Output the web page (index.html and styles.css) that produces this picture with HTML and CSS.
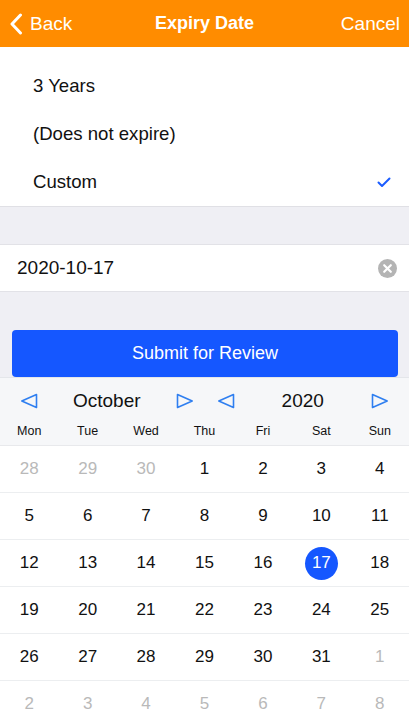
FILE: index.html
```html
<!DOCTYPE html>
<html>
<head>
    <title>Expiry Date</title>
    <link rel="stylesheet" href="styles.css">
</head>
<body>
    <div class="topbar">
        <div class="back">
            <svg width="14" height="22" viewBox="0 0 14 22"><path d="M11.5 2 L3 11 L11.5 20" fill="none" stroke="#fff" stroke-width="3" stroke-linecap="round" stroke-linejoin="round"/></svg>
            <span>Back</span>
        </div>
        <div class="title">Expiry Date</div>
        <div class="cancel">Cancel</div>
    </div>

    <div class="options">
        <div class="option">3 Years</div>
        <div class="option">(Does not expire)</div>
        <div class="option">Custom
            <svg class="check" width="14" height="11" viewBox="0 0 14 11"><path d="M1.5 5.5 L5 9 L12.5 1.5" fill="none" stroke="#1a5cff" stroke-width="2" stroke-linecap="round" stroke-linejoin="round"/></svg>
        </div>
    </div>

    <div class="gap"></div>

    <div class="field">
        <span>2020-10-17</span>
        <svg width="19" height="19" viewBox="0 0 19 19"><circle cx="9.5" cy="9.5" r="9.5" fill="#b4b4b4"/><path d="M6.2 6.2 L12.8 12.8 M12.8 6.2 L6.2 12.8" stroke="#fff" stroke-width="2.2" stroke-linecap="round"/></svg>
    </div>

    <div class="actions">
        <button class="submit">Submit for Review</button>
    </div>

    <div class="calendar">
        <div class="cal-head">
            <div class="nav month">
                <svg class="arrow" width="18" height="16" viewBox="0 0 18 16"><path d="M16.5 1.5 L1.8 8 L16.5 14.5 Z" fill="none" stroke="#2f7ff0" stroke-width="1.6" stroke-linejoin="round"/></svg>
                <span class="label">October</span>
                <svg class="arrow" width="18" height="16" viewBox="0 0 18 16"><path d="M1.5 1.5 L16.2 8 L1.5 14.5 Z" fill="none" stroke="#2f7ff0" stroke-width="1.6" stroke-linejoin="round"/></svg>
            </div>
            <div class="nav year">
                <svg class="arrow" width="18" height="16" viewBox="0 0 18 16"><path d="M16.5 1.5 L1.8 8 L16.5 14.5 Z" fill="none" stroke="#2f7ff0" stroke-width="1.6" stroke-linejoin="round"/></svg>
                <span class="label">2020</span>
                <svg class="arrow" width="18" height="16" viewBox="0 0 18 16"><path d="M1.5 1.5 L16.2 8 L1.5 14.5 Z" fill="none" stroke="#2f7ff0" stroke-width="1.6" stroke-linejoin="round"/></svg>
            </div>
        </div>
        <div class="weekdays">
            <span>Mon</span><span>Tue</span><span>Wed</span><span>Thu</span><span>Fri</span><span>Sat</span><span>Sun</span>
        </div>
        <div class="week">
            <span class="muted">28</span><span class="muted">29</span><span class="muted">30</span><span>1</span><span>2</span><span>3</span><span>4</span>
        </div>
        <div class="week">
            <span>5</span><span>6</span><span>7</span><span>8</span><span>9</span><span>10</span><span>11</span>
        </div>
        <div class="week">
            <span>12</span><span>13</span><span>14</span><span>15</span><span>16</span><span><b class="selected">17</b></span><span>18</span>
        </div>
        <div class="week">
            <span>19</span><span>20</span><span>21</span><span>22</span><span>23</span><span>24</span><span>25</span>
        </div>
        <div class="week">
            <span>26</span><span>27</span><span>28</span><span>29</span><span>30</span><span>31</span><span class="muted">1</span>
        </div>
        <div class="week">
            <span class="muted">2</span><span class="muted">3</span><span class="muted">4</span><span class="muted">5</span><span class="muted">6</span><span class="muted">7</span><span class="muted">8</span>
        </div>
    </div>
</body>
</html>
```

FILE: styles.css
```css
body {
    margin: 0;
    font-family: "Liberation Sans", Arial, sans-serif;
    background-color: #efeff4;
    color: #111;
    overflow: hidden;
}
.topbar {
    height: 47px;
    background-color: #ff8c00;
    color: #fff;
    display: flex;
    align-items: center;
    padding: 0 9px;
    font-size: 19px;
}
.back {
    flex: 1;
    display: flex;
    align-items: center;
    gap: 7px;
}
.title {
    font-weight: bold;
    font-size: 18px;
}
.cancel {
    flex: 1;
    text-align: right;
}
.options {
    background-color: #fff;
    padding-top: 15px;
    border-bottom: 1px solid #e0e0e5;
}
.option {
    height: 48px;
    display: flex;
    align-items: center;
    justify-content: space-between;
    padding: 0 18px 0 33px;
    font-size: 18.6px;
}
.gap {
    height: 37px;
}
.field {
    height: 46px;
    background-color: #fff;
    border-top: 1px solid #e2e2e7;
    border-bottom: 1px solid #e2e2e7;
    display: flex;
    align-items: center;
    justify-content: space-between;
    padding: 0 12px 0 17px;
    font-size: 19px;
}
.actions {
    padding: 38px 11px 0 12px;
}
.submit {
    width: 100%;
    height: 47px;
    border: none;
    border-radius: 4px;
    background-color: #1557ff;
    color: #fff;
    font-family: inherit;
    font-size: 18px;
}
.calendar {
    background-color: #fff;
    border-top: 1px solid #e4e6ea;
}
.cal-head {
    background-color: #f6f7f9;
    display: grid;
    grid-template-columns: 1fr 1fr;
    height: 46px;
    align-items: center;
}
.nav {
    display: flex;
    justify-content: space-between;
    align-items: center;
}
.nav.month {
    padding: 0 11px 0 20px;
}
.nav.year {
    padding: 0 20px 0 12px;
}
.arrow {
    display: block;
}
.label {
    font-size: 19px;
}
.weekdays {
    background-color: #f6f7f9;
    display: grid;
    grid-template-columns: repeat(7, 1fr);
    height: 21px;
    font-size: 12.5px;
    text-align: center;
    border-bottom: 1px solid #e8e9ec;
}
.week {
    display: grid;
    grid-template-columns: repeat(7, 1fr);
    height: 46px;
    border-bottom: 1px solid #eceef0;
    align-items: center;
    text-align: center;
    font-size: 17px;
}
.muted {
    color: #b9b9b9;
}
.selected {
    display: inline-flex;
    width: 33px;
    height: 33px;
    border-radius: 50%;
    background-color: #1557ff;
    color: #fff;
    font-weight: normal;
    align-items: center;
    justify-content: center;
}
```
